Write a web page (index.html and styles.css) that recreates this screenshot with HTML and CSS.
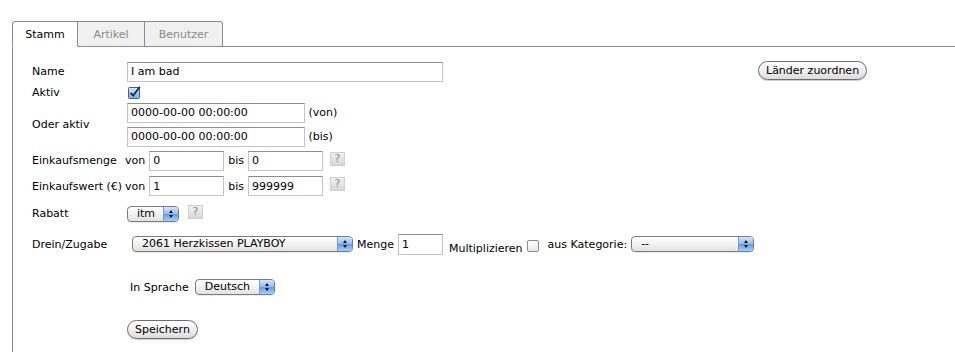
FILE: index.html
```html
<!DOCTYPE html>
<html lang="de">
<head>
  <meta charset="UTF-8" />
  <title>Stamm</title>
  <link rel="stylesheet" href="styles.css">
</head>
<body>
  <div class="tabs">
    <div class="tab active">Stamm</div>
    <div class="tab">Artikel</div>
    <div class="tab">Benutzer</div>
  </div>

  <div class="panel">
    <div class="form">
      <div class="row r-name">
        <div class="label">Name</div>
        <div class="field"><input type="text" class="txt w-name" value="I am bad"></div>
      </div>
      <div class="row r-aktiv">
        <div class="label">Aktiv</div>
        <div class="field">
          <svg class="chk" width="13" height="13" viewBox="0 0 13 13">
            <defs>
              <linearGradient id="cg" x1="0" y1="0" x2="0" y2="1">
                <stop offset="0" stop-color="#d6e8fb"/>
                <stop offset="1" stop-color="#7fb0e8"/>
              </linearGradient>
            </defs>
            <rect x="0.5" y="1.5" width="11" height="11" rx="1" fill="url(#cg)" stroke="#3f5f8c"/>
            <path d="M2.6 6.8 L5.2 9.6 L11.8 0.8" fill="none" stroke="#14284a" stroke-width="1.8"/>
          </svg>
        </div>
      </div>
      <div class="row r-oder">
        <div class="label">Oder aktiv</div>
        <div class="field stack">
          <div class="line"><input type="text" class="txt w-date" value="0000-00-00 00:00:00"> (von)</div>
          <div class="line"><input type="text" class="txt w-date" value="0000-00-00 00:00:00"> (bis)</div>
        </div>
      </div>
      <div class="row r-menge">
        <div class="label">Einkaufsmenge</div>
        <div class="field">
          von <input type="text" class="txt w-num" value="0">
          bis <input type="text" class="txt w-num" value="0">
          <span class="help">?</span>
        </div>
      </div>
      <div class="row r-wert">
        <div class="label">Einkaufswert (€)</div>
        <div class="field">
          von <input type="text" class="txt w-num" value="1">
          bis <input type="text" class="txt w-num" value="999999">
          <span class="help">?</span>
        </div>
      </div>
      <div class="row r-rabatt">
        <div class="label">Rabatt</div>
        <div class="field">
          <span class="sel w-itm"><span class="sel-text">itm</span><span class="sel-arrow"><span class="up"></span><span class="down"></span></span></span>
          <span class="help help-rabatt">?</span>
        </div>
      </div>
      <div class="row r-drein">
        <div class="label">Drein/Zugabe</div>
        <div class="field">
          <span class="sel w-artikel"><span class="sel-text">2061 Herzkissen PLAYBOY</span><span class="sel-arrow"><span class="up"></span><span class="down"></span></span></span>
          Menge <input type="text" class="txt w-menge" value="1">
          <span class="low">Multiplizieren</span>
          <span class="box"></span>
          aus Kategorie:
          <span class="sel w-kat"><span class="sel-text">--</span><span class="sel-arrow"><span class="up"></span><span class="down"></span></span></span>
        </div>
      </div>
      <div class="row r-sprache">
        <div class="label"></div>
        <div class="field sprache">
          In Sprache
          <span class="sel w-sprache"><span class="sel-text">Deutsch</span><span class="sel-arrow"><span class="up"></span><span class="down"></span></span></span>
        </div>
      </div>
      <div class="row r-save">
        <div class="label"></div>
        <div class="field"><button class="btn save">Speichern</button></div>
      </div>
    </div>

    <div class="side">
      <button class="btn">Länder zuordnen</button>
    </div>
  </div>
</body>
</html>
```

FILE: styles.css
```css
* {
  box-sizing: border-box;
}

body {
  margin: 0;
  padding: 21px 0 0 12px;
  font-family: "DejaVu Sans", Verdana, sans-serif;
  font-size: 11px;
  color: #000;
  background: #fff;
  overflow: hidden;
}

/* tabs */
.tabs {
  display: flex;
  height: 26px;
}

.tab {
  height: 26px;
  padding: 6px 0 0;
  border: 1px solid #8c8c8c;
  border-left: none;
  background: #f0f0f0;
  color: #8a8a8a;
  text-align: center;
  width: 67px;
}

.tab:first-child {
  width: 66px;
  border-left: 1px solid #8c8c8c;
  border-top-left-radius: 3px;
}

.tab:last-child {
  width: 78px;
  border-top-right-radius: 3px;
}

.tab.active {
  background: #fff;
  color: #000;
  border-bottom-color: #fff;
}

.panel {
  display: flex;
  width: 1200px;
  height: 320px;
  margin-top: -1px;
  border-top: 1px solid #8c8c8c;
  border-left: 1px solid #8c8c8c;
  padding: 13px 0 0 15px;
}

/* form rows */
.form {
  flex: 0 0 730px;
}

.row {
  display: flex;
  align-items: center;
  white-space: nowrap;
}

.label {
  flex: 0 0 97px;
  padding-left: 4px;
}

.field {
  display: flex;
  align-items: center;
  gap: 0 4px;
}

.field.stack {
  flex-direction: column;
  align-items: flex-start;
  gap: 4px;
}

.r-name { height: 23px; }
.r-aktiv { height: 18px; }
.r-oder { height: 47px; }
.r-menge { height: 25px; }
.r-wert { height: 26px; }
.r-rabatt { height: 29px; }
.r-drein { height: 32px; }
.r-sprache { height: 54px; }
.r-save { height: 30px; }

.txt {
  height: 20px;
  margin: 0 0 0 2px;
  padding: 1px 3px;
  border: 1px solid #c4c4c4;
  border-top-color: #8e8e8e;
  font-family: inherit;
  font-size: 11px;
  color: #000;
  vertical-align: middle;
}

.w-name { width: 316px; }
.w-date { width: 178px; }
.w-num { width: 75px; margin-left: 0; }
.w-num + .help { margin-left: 3px; }
.w-menge { width: 45px; height: 21px; margin: 0; }

.chk {
  display: block;
  margin-left: 3px;
}

/* help icon */
.help {
  display: inline-block;
  width: 15px;
  height: 14px;
  border: 1px solid #cfcfcf;
  background: linear-gradient(#f0f0f0, #d8d8d8);
  color: #8c8c8c;
  font-size: 11px;
  line-height: 12px;
  text-align: center;
  margin-top: -4px;
}

.help-rabatt {
  margin-left: 5px;
  margin-top: -3px;
}

/* mac style select */
.sel {
  display: inline-flex;
  height: 16px;
  margin-left: 2px;
  border: 1px solid #7c7c7c;
  border-radius: 4px;
  background: linear-gradient(#ffffff, #f2f2f2 50%, #e2e2e2);
  overflow: hidden;
  box-shadow: 0 1px 0 rgba(0, 0, 0, 0.08);
}

.sel-text {
  flex: 1;
  padding-left: 9px;
  line-height: 14px;
  white-space: nowrap;
}

.sel-arrow {
  width: 15px;
  border-left: 1px solid #7f9cc6;
  background: linear-gradient(#d3e6fb, #8dbdf1 50%, #5c9ee8 52%, #a9d0f7);
  display: flex;
  flex-direction: column;
  align-items: center;
  justify-content: center;
  gap: 2px;
}

.up,
.down {
  width: 0;
  height: 0;
  border-left: 2.5px solid transparent;
  border-right: 2.5px solid transparent;
}

.up { border-bottom: 3px solid #111; }
.down { border-top: 3px solid #111; }

.w-itm { width: 52px; }
.w-artikel { width: 221px; margin-left: 7px; }
.w-kat { width: 123px; margin-left: 0; }
.w-sprache { width: 80px; }

.low {
  margin: 9px 0 0 2px;
}

.box {
  display: inline-block;
  width: 12px;
  height: 12px;
  margin: 4px 5px 0 0;
  border: 1px solid #8a8a8a;
  border-radius: 2px;
  background: linear-gradient(#fff, #e6e6e6);
}

.sprache {
  padding-left: 5px;
}

/* buttons */
.btn {
  height: 19px;
  padding: 0 7px;
  border: 1px solid #6e6e6e;
  border-radius: 10px;
  background: linear-gradient(#ffffff, #f0f0f0 50%, #dcdcdc);
  font-family: inherit;
  font-size: 11px;
  color: #000;
  box-shadow: 0 1px 1px rgba(0, 0, 0, 0.2);
}

.save {
  margin-left: 2px;
}

.side {
  padding-top: 1px;
}
```
